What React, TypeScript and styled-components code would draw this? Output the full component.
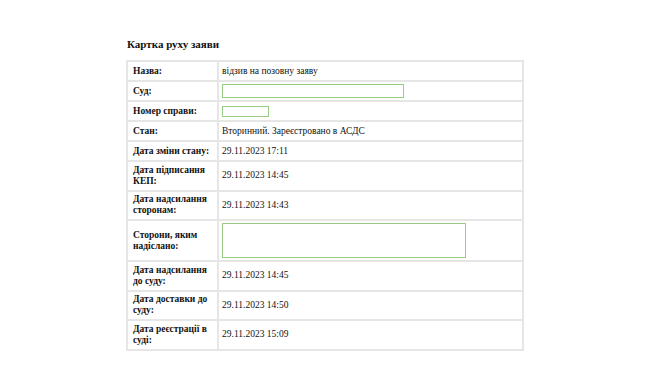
import React from 'react';
import styled, { createGlobalStyle } from 'styled-components';

const GlobalStyle = createGlobalStyle`
  html, body {
    margin: 0;
    padding: 0;
    background: #ffffff;
  }
  body {
    font-family: "Liberation Serif", "Times New Roman", serif;
    color: #111;
  }
`;

type Row = {
  label: string;
  value?: string;
  field?: 'court' | 'case' | 'parties';
  size?: 'short' | 'tall' | 'box';
};

const rows: Row[] = [
  { label: 'Назва:', value: 'відзив на позовну заяву' },
  { label: 'Суд:', field: 'court' },
  { label: 'Номер справи:', field: 'case' },
  { label: 'Стан:', value: 'Вторинний. Зареєстровано в АСДС' },
  { label: 'Дата зміни стану:', value: '29.11.2023 17:11' },
  { label: 'Дата підписання КЕП:', value: '29.11.2023 14:45', size: 'tall' },
  { label: 'Дата надсилання сторонам:', value: '29.11.2023 14:43', size: 'tall' },
  { label: 'Сторони, яким надіслано:', field: 'parties', size: 'box' },
  { label: 'Дата надсилання до суду:', value: '29.11.2023 14:45', size: 'tall' },
  { label: 'Дата доставки до суду:', value: '29.11.2023 14:50', size: 'tall' },
  { label: 'Дата реєстрації в суді:', value: '29.11.2023 15:09', size: 'tall' },
];

// cell heights without the 2px grid line
const rowHeight = { short: 18, tall: 27.5, box: 39 };

function RequestCard() {
  return (
    <Page>
      <Title>Картка руху заяви</Title>
      <Table>
        <tbody>
          {rows.map((row) => (
            <Line key={row.label} $height={rowHeight[row.size ?? 'short']}>
              <LabelCell>{row.label}</LabelCell>
              <ValueCell>
                {row.field === 'court' && <Field $width={182} $height={14} />}
                {row.field === 'case' && <Field $width={47} $height={11} />}
                {row.field === 'parties' && <Field $width={244} $height={35} />}
                {!row.field && row.value}
              </ValueCell>
            </Line>
          ))}
        </tbody>
      </Table>
    </Page>
  );
}

export default function App() {
  return (
    <>
      <GlobalStyle />
      <RequestCard />
    </>
  );
}

const Page = styled.div`
  width: 667px;
  height: 375px;
  padding: 38px 0 0 126px;
  box-sizing: border-box;
`;

const Title = styled.h2`
  margin: 0 0 10px 1px;
  font-family: "Liberation Serif", "Times New Roman", serif;
  font-size: 11px;
  font-weight: bold;
  line-height: 12px;
`;

const Table = styled.table`
  width: 398px;
  border-collapse: collapse;
  border: 2px solid #e6e6e6;
  font-family: "Liberation Serif", "Times New Roman", serif;
  font-size: 9.5px;
  color: #111;
`;

const Line = styled.tr<{ $height: number }>`
  td {
    height: ${(p) => p.$height}px;
  }
`;

const LabelCell = styled.td`
  width: 80px;
  border: 2px solid #e6e6e6;
  padding: 0 4px 0 5px;
  font-family: "Liberation Serif", "Times New Roman", serif;
  font-weight: bold;
  line-height: 11px;
  vertical-align: middle;
`;

const ValueCell = styled.td`
  border: 2px solid #e6e6e6;
  padding: 0 4px 0 3px;
  font-family: "Liberation Serif", "Times New Roman", serif;
  line-height: 11px;
  vertical-align: middle;
`;

const Field = styled.div<{ $width: number; $height: number }>`
  width: ${(p) => p.$width}px;
  height: ${(p) => p.$height}px;
  border: 1px solid #96cc84;
  box-sizing: border-box;
  background: #fff;
`;
